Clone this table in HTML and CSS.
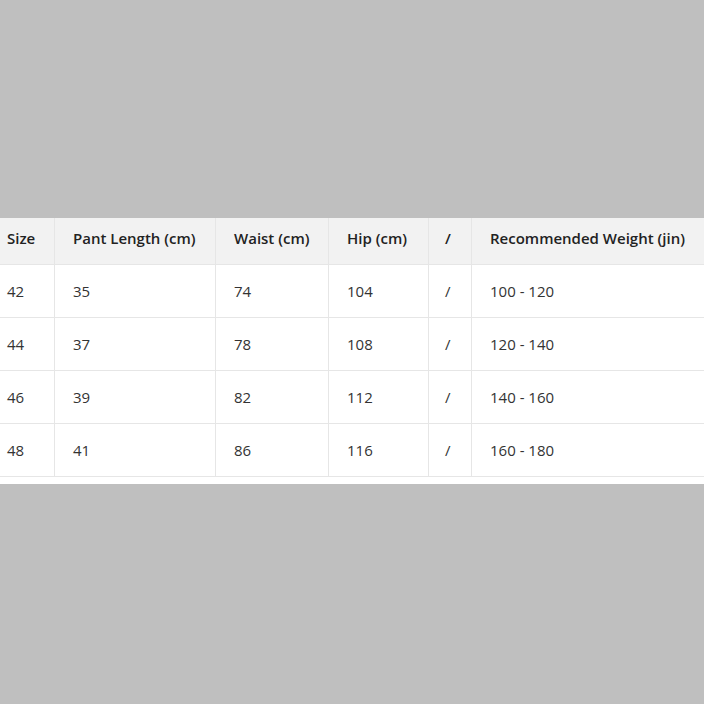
FILE: index.html
```html
<!DOCTYPE html>
<html>
<head>
<meta charset="utf-8">
<link rel="stylesheet" href="styles.css">
</head>
<body>
<div class="panel">
  <table class="size-table">
    <colgroup>
      <col class="c1"><col class="c2"><col class="c3"><col class="c4"><col class="c5"><col class="c6">
    </colgroup>
    <thead>
      <tr><th>Size</th><th>Pant Length (cm)</th><th>Waist (cm)</th><th>Hip (cm)</th><th>/</th><th>Recommended Weight (jin)</th></tr>
    </thead>
    <tbody>
      <tr><td>42</td><td>35</td><td>74</td><td>104</td><td>/</td><td>100 - 120</td></tr>
      <tr><td>44</td><td>37</td><td>78</td><td>108</td><td>/</td><td>120 - 140</td></tr>
      <tr><td>46</td><td>39</td><td>82</td><td>112</td><td>/</td><td>140 - 160</td></tr>
      <tr><td>48</td><td>41</td><td>86</td><td>116</td><td>/</td><td>160 - 180</td></tr>
    </tbody>
  </table>
</div>
</body>
</html>
```
FILE: styles.css
```css
html, body {
  margin: 0;
  padding: 0;
  background: #bfbfbf;
  overflow: hidden;
}
body {
  width: 704px;
  height: 704px;
  font-family: "Open Sans", "Noto Sans", sans-serif;
}
.panel {
  margin-top: 218px;
  background: #ffffff;
  padding-bottom: 7px;
  overflow: hidden;
}
.size-table {
  margin-left: -13px;
  width: 730px;
  border-collapse: separate;
  border-spacing: 0;
  table-layout: fixed;
  font-size: 15px;
  line-height: 20px;
}
.c1 { width: 68px; }
.c2 { width: 161px; }
.c3 { width: 113px; }
.c4 { width: 100px; }
.c5 { width: 43px; }
.c6 { width: 245px; }
.size-table th,
.size-table td {
  text-align: left;
  padding: 0 0 0 18px;
  border-right: 1px solid #e6e6e6;
  border-bottom: 1px solid #e6e6e6;
  white-space: nowrap;
  box-sizing: border-box;
}
.size-table th {
  height: 47px;
  padding-bottom: 6px;
  background: #f2f2f2;
  font-weight: 600;
  color: #222222;
}
.size-table td {
  height: 53px;
  padding-top: 0;
  color: #333333;
}
.size-table th:first-child,
.size-table td:first-child {
  padding-left: 20px;
}
.size-table th:nth-child(5),
.size-table td:nth-child(5) {
  padding-left: 16px;
}
```
